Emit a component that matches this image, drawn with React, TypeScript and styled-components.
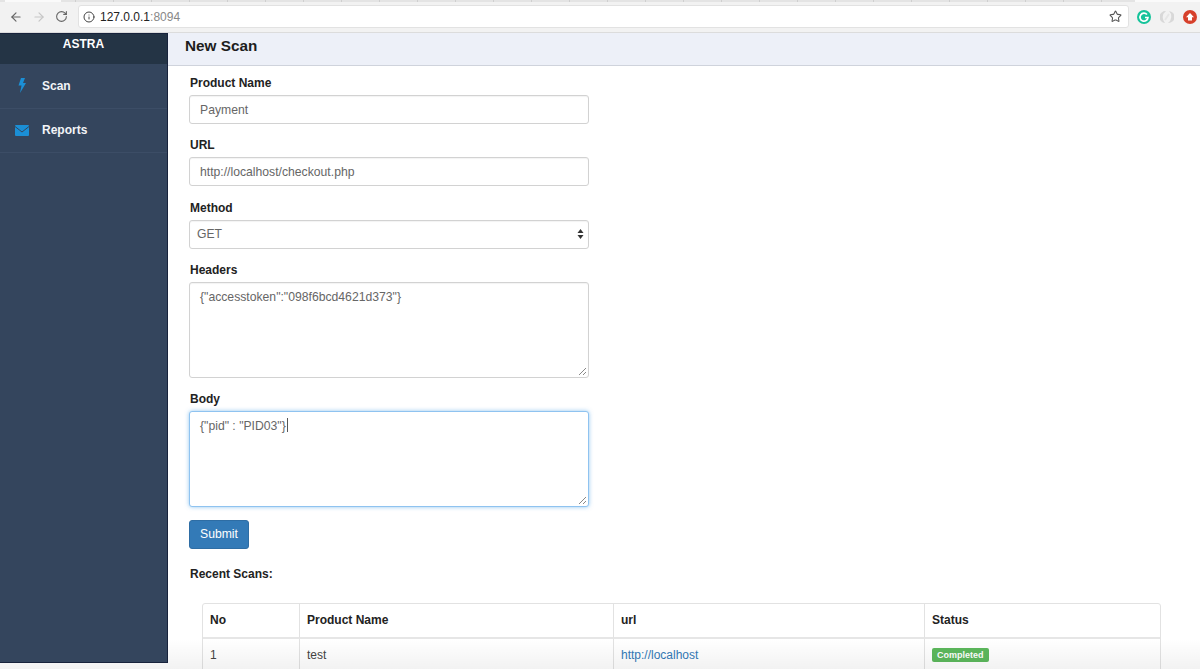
import styled, { createGlobalStyle } from "styled-components";
import { ArrowLeft, ArrowRight, RotateCw, Info, Star } from "lucide-react";

const GlobalStyle = createGlobalStyle`
  html, body {
    margin: 0;
    height: 100%;
    overflow: hidden;
    background: #fff;
  }
  * {
    box-sizing: border-box;
  }
  body {
    font-family: "Liberation Sans", Arial, sans-serif;
    font-size: 12.2px;
    color: #333;
  }
`;

const Page = styled.div`
  position: relative;
  height: 669px;
  display: flex;
  flex-direction: column;
  overflow: hidden;
`;

const TabStrip = styled.div`
  height: 2px;
  flex: none;
  display: flex;
  background: repeating-linear-gradient(90deg, #e4e4e4 0 37px, #cfcfcf 37px 38px);
`;

const ActiveTab = styled.div<{ $w: number; $ml: number }>`
  width: ${(p) => p.$w}px;
  margin-left: ${(p) => p.$ml}px;
  background: #fafafa;
`;

const Chrome = styled.div`
  height: 31px;
  flex: none;
  display: flex;
  align-items: center;
  gap: 8px;
  padding: 0 3px 1px 9px;
  background: #f2f2f2;
  border-bottom: 1px solid #dcdcdc;
`;

const NavIcons = styled.div`
  display: flex;
  align-items: center;
  gap: 9px;
  width: 61px;
  color: #666;
`;

const AddressBar = styled.div`
  flex: 1;
  height: 23px;
  display: flex;
  align-items: center;
  gap: 5px;
  padding: 0 6px 0 4px;
  background: #fff;
  border: 1px solid #e2e2e2;
  border-radius: 3px;
  font-size: 12px;
  color: #222;
`;

const Port = styled.span`
  color: #888;
`;

const Spacer = styled.div`
  flex: 1;
`;

const Extensions = styled.div`
  display: flex;
  align-items: center;
  gap: 9px;
`;

const Body = styled.div`
  flex: 1;
  display: flex;
  min-height: 0;
`;

const Sidebar = styled.aside`
  position: relative;
  z-index: 1;
  width: 168px;
  flex: none;
  height: 630px;
  background: #34455d;
  border: 1px solid #18233c;
  border-left: none;
`;

const Brand = styled.div`
  height: 30px;
  background: #243445;
  color: #fff;
  font-size: 12px;
  font-weight: bold;
  text-align: center;
  padding-top: 3px;
`;

const NavItem = styled.div`
  height: 44.5px;
  display: flex;
  align-items: center;
  padding-left: 15px;
  border-bottom: 1px solid #3c4d66;
  color: #f2f4f7;
  font-size: 12px;
  font-weight: bold;
`;

const NavIcon = styled.span`
  width: 27px;
  display: flex;
  justify-content: flex-start;
  color: #1b8fd6;
`;

const BoltIcon = styled.svg`
  margin-left: 3px;
`;

const Main = styled.main`
  flex: 1;
  min-width: 0;
`;

const Header = styled.div`
  height: 33px;
  background: #edf0f8;
  border-bottom: 1px solid #cfd3dc;
  padding: 4px 0 0 17px;
  font-size: 15.3px;
  font-weight: bold;
  color: #1d1d1d;
`;

const Form = styled.form`
  width: 400px;
  margin-left: 21px;
  padding-top: 9px;
`;

const Field = styled.div`
  margin-bottom: 13.35px;
`;

const Label = styled.label`
  display: block;
  font-size: 12px;
  font-weight: bold;
  color: #222;
  line-height: 16px;
  margin-bottom: 4px;
  padding-left: 1px;
`;

const Control = styled.div<{ $tall?: boolean; $focus?: boolean }>`
  position: relative;
  height: ${(p) => (p.$tall ? "96px" : "29px")};
  padding: ${(p) => (p.$tall ? "6px 10px" : "0 10px")};
  display: flex;
  align-items: ${(p) => (p.$tall ? "flex-start" : "center")};
  background: #fff;
  border: 1px solid ${(p) => (p.$focus ? "#8fc3f0" : "#d2d2d2")};
  border-radius: 3px;
  box-shadow: ${(p) =>
    p.$focus ? "0 0 4px rgba(102, 175, 233, 0.7)" : "inset 0 1px 1px rgba(0, 0, 0, 0.05)"};
  font-size: 12.2px;
  line-height: 16px;
  color: #666;
`;

const SelectControl = styled(Control)`
  justify-content: space-between;
  padding: 0 4px 0 7px;
`;

const Caret = styled.span`
  width: 1px;
  height: 14px;
  background: #555;
  margin-left: 1px;
`;

const Grip = styled.svg`
  position: absolute;
  right: 1px;
  bottom: 1px;
`;

const SubmitButton = styled.button`
  display: block;
  width: 60px;
  height: 29px;
  margin-top: -1px;
  background: #337ab7;
  border: 1px solid #2e6da4;
  border-radius: 3px;
  color: #fff;
  font-family: inherit;
  font-size: 12.2px;
  padding: 0;
`;

const SectionTitle = styled.div`
  font-size: 12px;
  font-weight: bold;
  color: #222;
  line-height: 16px;
  margin: 17px 0 0 22px;
`;

const TableWrap = styled.div`
  margin: 21px 39px 0 34px;
`;

const Table = styled.table`
  width: 100%;
  border-collapse: separate;
  border-spacing: 0;
  table-layout: fixed;
  border: 1px solid #e2e2e2;
  border-radius: 3px;
  font-size: 12px;
`;

const Th = styled.th<{ $w?: number }>`
  width: ${(p) => (p.$w ? `${p.$w}px` : "auto")};
  height: 35px;
  padding: 0 7px;
  text-align: left;
  font-weight: bold;
  color: #222;
  border-left: 1px solid #e2e2e2;
  border-bottom: 2px solid #e6e6e6;
  &:first-child {
    border-left: none;
  }
`;

const Td = styled.td`
  height: 32px;
  padding: 0 7px;
  color: #444;
  border-left: 1px solid #e2e2e2;
  &:first-child {
    border-left: none;
  }
`;

const Link = styled.a`
  color: #337ab7;
`;

const Badge = styled.span`
  display: inline-block;
  background: #5cb85c;
  color: #fff;
  font-size: 9px;
  font-weight: bold;
  line-height: 14px;
  padding: 0 5px;
  border-radius: 2px;
`;

const BottomFade = styled.div`
  position: absolute;
  left: 0;
  right: 0;
  bottom: 0;
  height: 30px;
  background: linear-gradient(rgba(0, 0, 0, 0), rgba(0, 0, 0, 0.05));
  pointer-events: none;
`;

const ResizeGrip = () => (
  <Grip width="10" height="10" viewBox="0 0 10 10">
    <path d="M2 9 L9 2 M6 9 L9 6" stroke="#888" strokeWidth="1" fill="none" />
  </Grip>
);

const SelectArrows = () => (
  <svg width="7" height="12" viewBox="0 0 7 12">
    <path d="M3.5 1 L6.5 5 H0.5 Z M3.5 11 L0.5 7 H6.5 Z" fill="#333" />
  </svg>
);

const Bolt = () => (
  <BoltIcon width="8" height="15" viewBox="0 0 8 15">
    <path d="M3 0 H7 L5 5 H8 L2 15 L3.5 7.5 H0.5 Z" fill="currentColor" />
  </BoltIcon>
);

const Envelope = () => (
  <svg width="14" height="11" viewBox="0 0 14 11">
    <rect width="14" height="11" rx="1" fill="currentColor" />
    <path d="M0 1.5 L7 7 L14 1.5" stroke="#34455d" strokeWidth="1" fill="none" />
  </svg>
);

const GrammarlyIcon = () => (
  <svg width="14" height="14" viewBox="0 0 14 14">
    <circle cx="7" cy="7" r="7" fill="#15c39a" />
    <path d="M10 4.5 A4 4 0 1 0 11 7.5 H8" stroke="#fff" strokeWidth="1.7" fill="none" />
  </svg>
);

const SwirlIcon = () => (
  <svg width="14" height="14" viewBox="0 0 14 14">
    <path d="M6 1 A6 6 0 0 0 5 13 A8 8 0 0 1 6 1 Z" fill="#d8d8d8" />
    <path d="M8 13 A6 6 0 0 0 9 1 A8 8 0 0 1 8 13 Z" fill="#d8d8d8" />
    <path d="M5 10 L9 4" stroke="#e6e6e6" strokeWidth="2" />
  </svg>
);

const UploadIcon = () => (
  <svg width="14" height="14" viewBox="0 0 14 14">
    <circle cx="7" cy="7" r="7" fill="#d6402b" />
    <path d="M7 3 L11 7.2 H9 V10.5 H5 V7.2 H3 Z" fill="#fff" />
  </svg>
);

export default function App() {
  return (
    <Page>
      <GlobalStyle />
      <TabStrip>
        <ActiveTab $w={56} $ml={5} />
        <ActiveTab $w={65} $ml={1074} />
      </TabStrip>
      <Chrome>
        <NavIcons>
          <ArrowLeft size={14} />
          <ArrowRight size={14} color="#c6c6c6" />
          <RotateCw size={13} />
        </NavIcons>
        <AddressBar>
          <Info size={12} color="#444" />
          <span>
            127.0.0.1<Port>:8094</Port>
          </span>
          <Spacer />
          <Star size={13} color="#555" />
        </AddressBar>
        <Extensions>
          <GrammarlyIcon />
          <SwirlIcon />
          <UploadIcon />
        </Extensions>
      </Chrome>
      <Body>
        <Sidebar>
          <Brand>ASTRA</Brand>
          <NavItem>
            <NavIcon>
              <Bolt />
            </NavIcon>
            Scan
          </NavItem>
          <NavItem>
            <NavIcon>
              <Envelope />
            </NavIcon>
            Reports
          </NavItem>
        </Sidebar>
        <Main>
          <Header>New Scan</Header>
          <Form>
            <Field>
              <Label>Product Name</Label>
              <Control>Payment</Control>
            </Field>
            <Field>
              <Label>URL</Label>
              <Control>http://localhost/checkout.php</Control>
            </Field>
            <Field>
              <Label>Method</Label>
              <SelectControl>
                GET
                <SelectArrows />
              </SelectControl>
            </Field>
            <Field>
              <Label>Headers</Label>
              <Control $tall>
                {'{"accesstoken":"098f6bcd4621d373"}'}
                <ResizeGrip />
              </Control>
            </Field>
            <Field>
              <Label>Body</Label>
              <Control $tall $focus>
                {'{"pid" : "PID03"}'}
                <Caret />
                <ResizeGrip />
              </Control>
            </Field>
            <SubmitButton type="button">Submit</SubmitButton>
          </Form>
          <SectionTitle>Recent Scans:</SectionTitle>
          <TableWrap>
            <Table>
              <thead>
                <tr>
                  <Th $w={96}>No</Th>
                  <Th $w={314}>Product Name</Th>
                  <Th $w={311}>url</Th>
                  <Th>Status</Th>
                </tr>
              </thead>
              <tbody>
                <tr>
                  <Td>1</Td>
                  <Td>test</Td>
                  <Td>
                    <Link>http://localhost</Link>
                  </Td>
                  <Td>
                    <Badge>Completed</Badge>
                  </Td>
                </tr>
              </tbody>
            </Table>
          </TableWrap>
        </Main>
      </Body>
      <BottomFade />
    </Page>
  );
}
